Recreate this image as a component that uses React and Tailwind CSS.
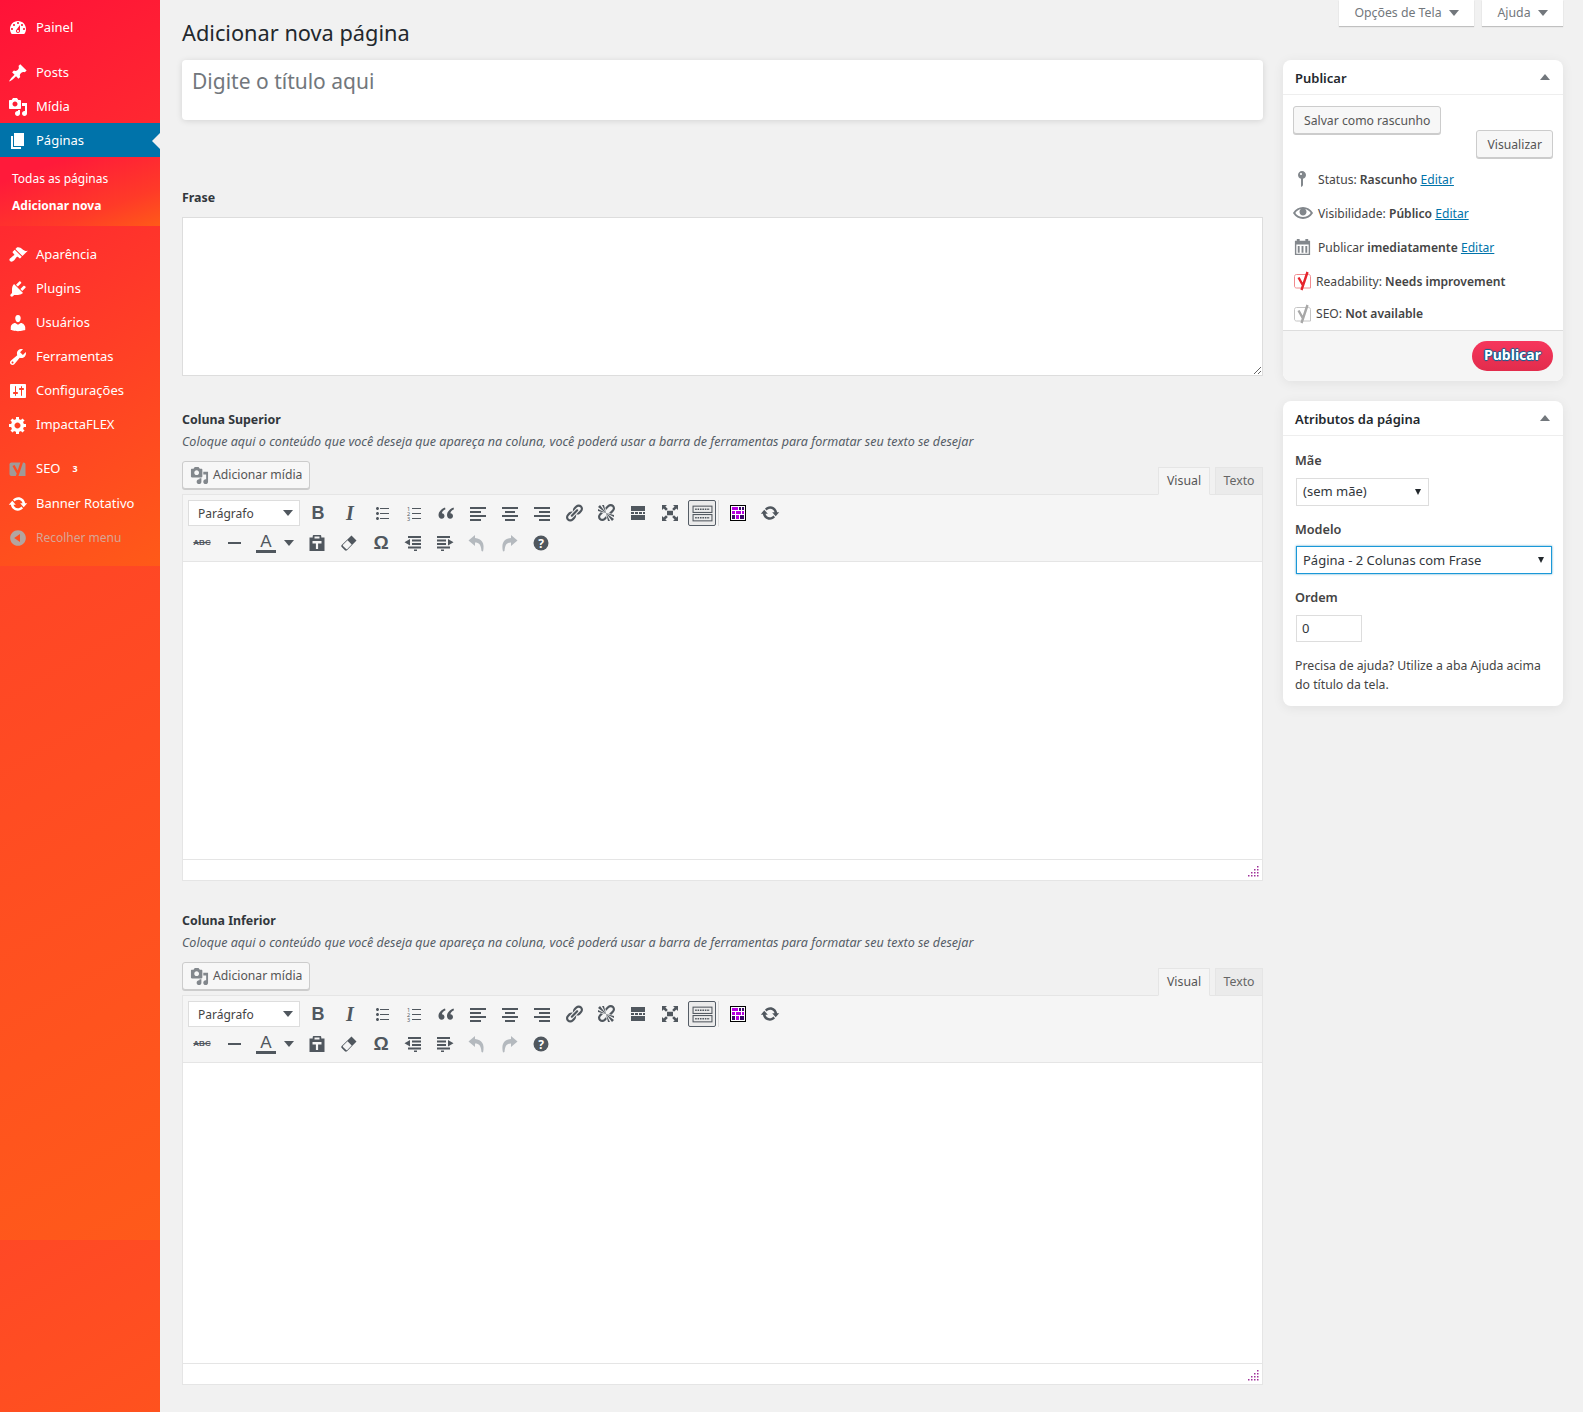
const P = {
  dashboard: "M3.76 16h12.48c1.1-1.37 1.76-3.11 1.76-5 0-4.42-3.58-8-8-8s-8 3.58-8 8c0 1.89.66 3.63 1.76 5zM10 4c.55 0 1 .45 1 1s-.45 1-1 1-1-.45-1-1 .45-1 1-1zM6 6c.55 0 1 .45 1 1s-.45 1-1 1-1-.45-1-1 .45-1 1-1zm8 0c.55 0 1 .45 1 1s-.45 1-1 1-1-.45-1-1 .45-1 1-1zm-5.37 5.55L12 7v6c0 1.1-.9 2-2 2s-2-.9-2-2c0-.57.24-1.08.63-1.45zM4 10c.55 0 1 .45 1 1s-.45 1-1 1-1-.45-1-1 .45-1 1-1zm12 0c.55 0 1 .45 1 1s-.45 1-1 1-1-.45-1-1 .45-1 1-1zm-5 3c0-.55-.45-1-1-1s-1 .45-1 1 .45 1 1 1 1-.45 1-1z",
  post: "M10.44 3.02l1.82-1.82 6.36 6.35-1.83 1.82c-1.05-.68-2.48-.57-3.41.36l-.75.75c-.92.93-1.04 2.35-.35 3.41l-1.83 1.82-2.41-2.41-2.8 2.79c-.42.42-3.38 2.71-3.8 2.29s1.86-3.39 2.28-3.81l2.79-2.79L4.1 9.36l1.83-1.82c1.05.69 2.48.57 3.4-.36l.75-.75c.93-.92 1.05-2.35.36-3.41z",
  media: "M13 11V4c0-.55-.45-1-1-1h-1.67L9 1H5L3.67 3H2c-.55 0-1 .45-1 1v7c0 .55.45 1 1 1h10c.55 0 1-.45 1-1zM7 4.5c1.38 0 2.5 1.12 2.5 2.5S8.38 9.5 7 9.5 4.5 8.38 4.5 7 5.62 4.5 7 4.5zM14 6h5v10.5c0 1.38-1.12 2.5-2.5 2.5S14 17.88 14 16.5s1.12-2.5 2.5-2.5c.17 0 .34.02.5.05V9h-3V6zm-4 8.05V13h2v3.5c0 1.38-1.12 2.5-2.5 2.5S7 17.88 7 16.5 8.12 14 9.5 14c.17 0 .34.02.5.05z",
  page: "M6 15V2h10v13H6zm-1 1h8v2H3V5h2v11z",
  brush: "M14.48 11.06L7.41 3.99l1.5-1.5c.5-.56 2.3-.47 3.51.32 1.21.8 1.43 1.28 2.91 2.1 1.18.64 2.45 1.26 4.45.85zm-.71.71L6.7 4.7 4.93 6.47c-.39.39-.39 1.02 0 1.41l1.06 1.06c.39.39.39 1.03 0 1.42-.6.6-1.43 1.11-2.21 1.69-.35.26-.7.53-1.01.84C1.43 13.23.9 15 2 16.1c1.1 1.1 2.9.6 4.2-.8.3-.3.6-.7.8-1 .6-.8 1.1-1.6 1.7-2.2.4-.4 1-.4 1.4 0l1.1 1c.4.4 1 .4 1.4 0z",
  plugin: "M13.11 4.36L9.87 7.6 8 5.73l3.24-3.24c.35-.34 1.05-.2 1.56.32.52.51.66 1.21.31 1.55zm-8 1.77l.91-1.12 9.01 9.01-1.19.84c-.71.71-2.63 1.16-3.82 1.16H6.14L4.9 17.26c-.59.59-1.54.59-2.12 0-.59-.58-.59-1.53 0-2.12l1.24-1.24v-3.88c0-1.13.4-3.19 1.09-3.89zm7.26 3.97l3.24-3.24c.34-.35 1.04-.21 1.55.31.52.51.66 1.21.31 1.55l-3.24 3.25z",
  users: "M10 9.25c-2.27 0-2.73-3.44-2.73-3.44C7 4.02 7.82 2 9.97 2c2.16 0 2.98 2.02 2.71 3.81 0 0-.41 3.44-2.68 3.44zm0 2.57L12.72 10c2.39 0 4.52 2.33 4.52 4.53v2.49s-3.65 1.13-7.24 1.13c-3.65 0-7.24-1.13-7.24-1.13v-2.49c0-2.25 1.94-4.48 4.47-4.48z",
  tools: "M16.68 9.77c-1.34 1.34-3.3 1.67-4.95.99l-5.41 6.52c-.99.99-2.59.99-3.58 0s-.99-2.59 0-3.57l6.52-5.42c-.68-1.65-.35-3.61.99-4.95 1.28-1.28 3.12-1.62 4.72-1.06l-2.89 2.89 2.82 2.82 2.86-2.87c.53 1.58.18 3.39-1.08 4.65zM3.81 16.21c.4.39 1.04.39 1.43 0 .4-.4.4-1.04 0-1.43-.39-.4-1.03-.4-1.43 0-.39.39-.39 1.03 0 1.43z",
  settings: "M18 16V4c0-.55-.45-1-1-1H3c-.55 0-1 .45-1 1v12c0 .55.45 1 1 1h14c.55 0 1-.45 1-1zM8 11h1c.55 0 1 .45 1 1s-.45 1-1 1H8v1.5c0 .28-.22.5-.5.5s-.5-.22-.5-.5V13H6c-.55 0-1-.45-1-1s.45-1 1-1h1V5.5c0-.28.22-.5.5-.5s.5.22.5.5V11zm5-2h-1c-.55 0-1-.45-1-1s.45-1 1-1h1V5.5c0-.28.22-.5.5-.5s.5.22.5.5V7h1c.55 0 1 .45 1 1s-.45 1-1 1h-1v5.5c0 .28-.22.5-.5.5s-.5-.22-.5-.5V9z",
  gear: "M18 12h-2.18c-.17.7-.44 1.35-.81 1.93l1.54 1.54-2.1 2.1-1.54-1.54c-.58.36-1.23.63-1.91.79V19H8v-2.18c-.68-.16-1.33-.43-1.91-.79l-1.54 1.54-2.12-2.12 1.54-1.54c-.36-.58-.63-1.23-.79-1.91H1V9.03h2.17c.16-.7.44-1.35.8-1.94L2.43 5.55l2.1-2.1 1.54 1.54c.58-.37 1.24-.64 1.93-.81V2h3v2.18c.68.16 1.33.43 1.91.79l1.54-1.54 2.12 2.12-1.54 1.54c.36.59.64 1.24.8 1.94H18V12zm-8.5 1.5c1.66 0 3-1.34 3-3s-1.34-3-3-3-3 1.34-3 3 1.34 3 3 3z",
  update: "M10.2 3.28c3.53 0 6.43 2.61 6.92 6h2.08l-3.5 4-3.5-4h2.32c-.45-1.97-2.21-3.45-4.32-3.45-1.45 0-2.73.71-3.54 1.78L4.95 5.66C6.23 4.2 8.11 3.28 10.2 3.28zm-.4 13.44c-3.52 0-6.43-2.61-6.92-6H.8l3.5-4c1.17 1.33 2.33 2.67 3.5 4H5.48c.45 1.97 2.21 3.45 4.32 3.45 1.45 0 2.73-.71 3.54-1.78l1.71 1.95c-1.28 1.46-3.15 2.38-5.25 2.38z",
  collapse: "M10 2.16c4.33 0 7.84 3.51 7.84 7.84s-3.51 7.84-7.84 7.84S2.16 14.33 2.16 10 5.71 2.16 10 2.16zm2 11.72V6.12L6.18 9.97z",
  pin: "M14 6c0 1.86-1.28 3.41-3 3.86V16c0 1-2 2-2 2V9.86c-1.72-.45-3-2-3-3.86 0-2.21 1.79-4 4-4s4 1.79 4 4zM8 5c0 .55.45 1 1 1s1-.45 1-1-.45-1-1-1-1 .45-1 1z",
  eye: "M19.7 9.4C17.7 6 14 3.9 10 3.9S2.3 6 .3 9.4L0 10l.3.6c2 3.4 5.7 5.5 9.7 5.5s7.7-2.1 9.7-5.5l.3-.6-.3-.6zM10 14.1c-3.1 0-6-1.6-7.7-4.1C3.6 8 5.7 6.6 8 6.1c-.9.6-1.5 1.7-1.5 2.9 0 1.9 1.6 3.5 3.5 3.5s3.5-1.6 3.5-3.5c0-1.2-.6-2.3-1.5-2.9 2.3.5 4.4 1.9 5.7 3.9-1.7 2.5-4.6 4.1-7.7 4.1z",
  calendar: "M2 4h2V2h3v2h6V2h3v2h2v15H2V4zm1.5 4v9.5h13V8h-13zM5 9.5h2v7H5v-7zm4 0h2v7H9v-7zm4 0h2v7h-2v-7z",
  ul: "M5.5 7C4.67 7 4 6.33 4 5.5 4 4.68 4.67 4 5.5 4 6.32 4 7 4.68 7 5.5 7 6.33 6.32 7 5.5 7zM8 5h9v1H8V5zm-2.5 7c-.83 0-1.5-.67-1.5-1.5C4 9.68 4.67 9 5.5 9c.82 0 1.5.68 1.5 1.5 0 .83-.68 1.5-1.5 1.5zM8 10h9v1H8v-1zm-2.5 7c-.83 0-1.5-.67-1.5-1.5 0-.82.67-1.5 1.5-1.5.82 0 1.5.68 1.5 1.5 0 .83-.68 1.5-1.5 1.5zM8 15h9v1H8v-1z",
  quote: "M9 4.5C5.5 5.8 2.5 8.6 2.5 12c0 2.2 1.4 3.7 3.2 3.7 1.6 0 2.8-1.2 2.8-2.8 0-1.5-1.1-2.6-2.6-2.7.2-1.6 1.5-3 3.6-4zM17.5 4.5c-3.5 1.3-6.5 4.1-6.5 7.5 0 2.2 1.4 3.7 3.2 3.7 1.6 0 2.8-1.2 2.8-2.8 0-1.500-1.100-2.600-2.600-2.700.2-1.600 1.500-3 3.600-4z",
  left: "M2 4h16v2H2V4zm0 4h11v2H2V8zm0 4h16v2H2v-2zm0 4h11v2H2v-2z",
  center: "M2 4h16v2H2V4zm3 4h10v2H5V8zm-3 4h16v2H2v-2zm3 4h10v2H5v-2z",
  right: "M2 4h16v2H2V4zm5 4h11v2H7V8zm-5 4h16v2H2v-2zm5 4h11v2H7v-2z",
  link: "M17.74 2.76c1.68 1.69 1.68 4.41 0 6.1l-1.53 1.52c-1.12 1.12-2.7 1.47-4.14 1.09l2.62-2.61.76-.77.76-.76c.84-.84.84-2.2 0-3.04-.84-.85-2.2-.85-3.04 0l-.77.76-3.38 3.38c-.37-1.44-.02-3.02 1.1-4.14l1.52-1.53c1.69-1.68 4.42-1.68 6.1 0zM8.59 13.43l5.34-5.34c.42-.42.42-1.1 0-1.52-.44-.43-1.13-.39-1.53 0l-5.33 5.34c-.42.42-.42 1.1 0 1.52.44.43 1.13.39 1.52 0zm-.76 2.29l4.14-4.15c.38 1.44.03 3.02-1.09 4.14l-1.52 1.53c-1.69 1.68-4.41 1.68-6.1 0-1.68-1.68-1.68-4.42 0-6.1l1.53-1.52c1.12-1.12 2.7-1.47 4.14-1.1l-4.14 4.15c-.85.84-.85 2.2 0 3.05.84.84 2.2.84 3.04 0z",
  unlink: "M17.74 2.26c1.68 1.69 1.68 4.41 0 6.1l-1.53 1.52c-.32.33-.69.58-1.08.77L13 10l1.69-1.64.76-.77.76-.76c.84-.84.84-2.2 0-3.04-.84-.85-2.2-.85-3.04 0l-.77.76-.76.76L10 7l-.65-2.14c.19-.38.44-.75.77-1.07l1.52-1.53c1.69-1.68 4.42-1.68 6.1 0zM2 4l8 6-6-8zm4-2l4 8-2-8H6zM2 6l8 4-8-2V6zm7.36 7.69L10 13l.74 2.35-1.38 1.39c-1.69 1.68-4.41 1.68-6.1 0-1.68-1.68-1.68-4.42 0-6.1l1.39-1.38L7 10l-.69.64-1.52 1.53c-.85.84-.85 2.2 0 3.04.84.85 2.2.85 3.04 0zM18 16l-8-6 6 8zm-4 2l-4-8 2 8h2zm4-4l-8-4 8 2v2z",
  more: "M3 3h14v5H3V3zm0 6h3v2H3V9zm4 0h3v2H7V9zm4 0h3v2h-3V9zm4 0h2v2h-2V9zM3 12h14v5H3v-5z",
  full: "M7 7.8v4.4h6V7.8H7zM2 2h5L5.4 3.6 7.8 6 6 7.8 3.6 5.4 2 7V2zm16 0v5l-1.6-1.6L14 7.8 12.2 6l2.4-2.4L13 2h5zM2 18v-5l1.6 1.6L6 12.2 7.8 14l-2.4 2.4L7 18H2zm16 0h-5l1.6-1.6-2.4-2.4 1.8-1.8 2.4 2.4L18 13v5z",
  paste: "M2.5 4.5h3.2V3.2C5.7 2.5 6.2 2 7 2h6c.8 0 1.3.5 1.3 1.2v1.3h3.2V18h-15V4.5zM7.5 3.6v1.9h5V3.6h-5zM5.5 8v2.4h3.4V16h2.2v-5.6h3.4V8h-9z",
  eraser: "M12.5 2.5l5 5-9.5 9.8c-.6.6-1.5.6-2.1 0L2.700 14c-.6-.6-.6-1.500 0-2.100l9.800-9.400zM8.500 7.300L4 11.800c-.3.3-.3.8 0 1.100l3.200 3.200c.3.3.8.3 1.100 0l4.400-4.600z",
  outdent: "M5 3h13v2H5V3zm4 3.500h9v2H9v-2zm0 3.500h9v2H9v-2zm-4 3.500h13v2H5v-2zm6 3h3V18h-3v-1.500zM1.500 9.200L7 6v6.500L1.500 9.200z",
  indent: "M2 3h13v2H2V3zm0 3.500h9v2H2v-2zm0 3.500h9v2H2v-2zm0 3.500h13v2H2v-2zm4 3h3V18H6v-1.500zM18.500 9.200L13 6v6.500l5.500-3.300z",
  undo: "M8 2L1.500 7.500 8 13V9.500c4 0 6 2 6.500 8.500l1.500.5c2-8-1-13-8-13.500V2z",
  redo: "M12 2l6.500 5.500L12 13V9.500c-4 0-6 2-6.500 8.500L4 18.500c-2-8 1-13 8-13.500V2z",
};

const Ico = ({ d, size = 20, className = "" }) => (
  <svg viewBox="0 0 20 20" width={size} height={size} fill="currentColor" className={className}>
    <path d={d} fillRule="evenodd" />
  </svg>
);

const Yoast = ({ fill, y, stroke, size = 20 }) => (
  <svg viewBox="0 0 20 20" width={size} height={size}>
    <path d="M3.5 3.5h12c1.2 0 2 .8 2 2v11.5H3.5c-1.2 0-2-.8-2-2V5.500c0-1.200.8-2 2-2z" fill={fill} stroke={stroke} strokeWidth="1" />
    <path d="M5.500 6.500l4.500 8M14.500 1l-6 18" fill="none" stroke={y} strokeWidth="2.400" />
  </svg>
);

const Triangle = ({ className = "" }) => (
  <span className={"inline-block w-0 h-0 border-x-[5px] border-x-transparent border-t-[6px] " + className} />
);

const MenuItem = ({ icon, label, active, muted, badge, custom }) => (
  <div className={`relative flex items-center h-[34px] pt-[2px] ${active ? "bg-[#0073aa]" : ""} ${muted ? "text-[#d9a594]" : "text-white"}`}>
    <span className={`w-[36px] pl-[8px] shrink-0 ${muted ? "text-[#b3a5a0]" : ""}`}>
      {custom || <Ico d={icon} />}
    </span>
    <span className={muted ? "text-[12px]" : ""}>{label}</span>
    {badge && <span className="ml-[12px] text-[9px] font-bold">{badge}</span>}
    {active && (
      <span className="absolute right-0 top-[10px] w-0 h-0 border-y-[8px] border-y-transparent border-r-[8px] border-r-[#f1f1f1]" />
    )}
  </div>
);

const Sidebar = () => (
  <aside className="w-[160px] shrink-0 flex flex-col bg-gradient-to-br from-[#ff4a24] to-[#ff521c]">
    <nav className="h-[566px] pt-[10px] bg-[linear-gradient(150deg,#ff1238_0%,#ff2a30_35%,#ff5a18_100%)]">
      <MenuItem icon={P.dashboard} label="Painel" />
      <div className="h-[11px]" />
      <MenuItem icon={P.post} label="Posts" />
      <MenuItem icon={P.media} label="Mídia" />
      <MenuItem icon={P.page} label="Páginas" active />
      <div className="h-[69px] pl-[12px] pt-[8px] text-[12px] text-white bg-[linear-gradient(160deg,#ff1a3a_20%,#ff3a28_70%,#ff5a18_100%)]">
        <div className="h-[27px] leading-[27px]">Todas as páginas</div>
        <div className="h-[27px] leading-[27px] font-bold">Adicionar nova</div>
      </div>
      <div className="h-[11px]" />
      <MenuItem icon={P.brush} label="Aparência" />
      <MenuItem icon={P.plugin} label="Plugins" />
      <MenuItem icon={P.users} label="Usuários" />
      <MenuItem icon={P.tools} label="Ferramentas" />
      <MenuItem icon={P.settings} label="Configurações" />
      <MenuItem icon={P.gear} label="ImpactaFLEX" />
      <div className="h-[10px]" />
      <MenuItem custom={<Yoast fill="#a09a98" y="#ff4a22" size={20} />} label="SEO" badge="3" />
      <div className="h-px" />
      <MenuItem icon={P.update} label="Banner Rotativo" />
      <MenuItem icon={P.collapse} label="Recolher menu" muted />
    </nav>
    <div className="h-[674px] bg-[linear-gradient(150deg,#ff4526,#ff5a1a)]" />
    <div className="flex-1 bg-[linear-gradient(150deg,#ff4826,#ff521e)]" />
  </aside>
);

const WpButton = ({ children, className = "" }) => (
  <div className={"flex items-center h-[28px] px-[10px] whitespace-nowrap bg-[#f7f7f7] border border-[#cccccc] rounded-[3px] shadow-[0_1px_0_#cccccc] text-[12.200px] text-[#555555] " + className}>
    {children}
  </div>
);

const TbIcon = ({ d, className = "text-[#50575e]" }) => (
  <div className={"w-[32px] h-[30px] flex items-center justify-center shrink-0 " + className}>
    <Ico d={d} />
  </div>
);

const TbText = ({ children, className = "" }) => (
  <div className={"w-[32px] h-[30px] flex items-center justify-center shrink-0 text-[#50575e] " + className}>{children}</div>
);

const Toolbar = () => (
  <div className="h-[67px] bg-[#f5f5f5] border-b border-[#e5e5e5] py-[3px]">
    <div className="flex items-center h-[30px] pl-[5px]">
      <div className="w-[112px] h-[26px] mr-[2px] flex items-center justify-between pl-[9px] pr-[6px] bg-white border border-[#dddddd] text-[#444]">
        <span className="text-[12px] pt-[2px]">Parágrafo</span>
        <Triangle className="border-t-[#50575e]" />
      </div>
      <TbText className="font-bold text-[18px] font-['Liberation_Sans',sans-serif]">B</TbText>
      <TbText className="font-bold italic text-[20px] font-['Liberation_Serif',serif]">I</TbText>
      <TbIcon d={P.ul} />
      <TbText>
        <svg viewBox="0 0 20 20" width="20" height="20" fill="currentColor">
          <path d="M8 5h9v1H8V5zm0 5h9v1H8v-1zm0 5h9v1H8v-1z" />
          <text x="3" y="7.500" fontSize="5.500">1</text>
          <text x="3" y="12.500" fontSize="5.500">2</text>
          <text x="3" y="17.500" fontSize="5.500">3</text>
        </svg>
      </TbText>
      <TbIcon d={P.quote} />
      <TbIcon d={P.left} />
      <TbIcon d={P.center} />
      <TbIcon d={P.right} />
      <TbIcon d={P.link} />
      <TbIcon d={P.unlink} />
      <TbIcon d={P.more} />
      <TbIcon d={P.full} />
      <TbText>
        <div className="w-[28px] h-[26px] flex items-center justify-center bg-[#ebebeb] border border-[#555d66] rounded-[2px]">
          <svg viewBox="0 0 20 20" width="21" height="21" fill="none" stroke="#50575e">
            <rect x="1" y="3" width="18" height="6" />
            <rect x="1" y="11" width="18" height="6" />
            <path d="M3 6h14M3 14h14" strokeWidth="1.500" strokeDasharray="1.500 .8" />
          </svg>
        </div>
      </TbText>
      <div className="w-px h-[26px] bg-[#dddddd] mr-[3px]" />
      <TbText>
        <svg viewBox="0 0 16 16" width="16" height="16">
          <rect x=".5" y=".5" width="15" height="15" fill="#fff" stroke="#000" />
          <path d="M2 2h6v3H2zM12 6h2v3h-2zM6 6h5v3H6zM2 6h3v3H2zM6 10h3v4H6z" fill="#b400e0" />
          <path d="M9 2h2v3H9zM12 2h2v3h-2zM2 10h3v4H2zM10 10h4v4h-4z" fill="#3c0a6a" />
        </svg>
      </TbText>
      <TbIcon d={P.update} />
    </div>
    <div className="flex items-center h-[30px] pl-[3px]">
      <TbText className="text-[8px] font-bold line-through font-['Liberation_Sans',sans-serif]">ABC</TbText>
      <TbText>
        <span className="w-[13px] h-[2px] bg-[#50575e]" />
      </TbText>
      <div className="w-[51px] h-[30px] flex items-center pl-[6px] shrink-0">
        <span className="w-[20px] flex flex-col items-center text-[#50575e] text-[17px] leading-[17px] border-b-[3px] border-[#50575e] font-['Liberation_Sans',sans-serif]">A</span>
        <Triangle className="ml-[8px] border-t-[#50575e]" />
      </div>
      <TbIcon d={P.paste} />
      <TbIcon d={P.eraser} />
      <TbText className="text-[19px] font-['Liberation_Sans',sans-serif] font-bold">Ω</TbText>
      <TbIcon d={P.outdent} />
      <TbIcon d={P.indent} />
      <TbIcon d={P.undo} className="text-[#b4b9be]" />
      <TbIcon d={P.redo} className="text-[#b4b9be]" />
      <TbText>
        <svg viewBox="0 0 20 20" width="20" height="20">
          <circle cx="10" cy="10" r="7.500" fill="#50575e" />
          <text x="10" y="14.500" textAnchor="middle" fontSize="12" fontWeight="700" fill="#fff">?</text>
        </svg>
      </TbText>
    </div>
  </div>
);

const Grip = () => (
  <svg width="12" height="12" viewBox="0 0 12 12" fill="#a0309a">
    {[[9, 0], [6, 3], [9, 3], [3, 6], [6, 6], [9, 6], [0, 9], [3, 9], [6, 9], [9, 9]].map(([x, y], i) => (
      <rect key={i} x={x} y={y} width="1.500" height="1.500" />
    ))}
  </svg>
);

const EditorField = ({ label, bodyH, mt }) => (
  <section className={mt}>
    <div className="h-[20px] leading-[22px] text-[12.400px] font-bold text-[#32373c]">{label}</div>
    <div className="mt-[2px] h-[20px] leading-[22px] italic text-[#555d66] text-[12.540px] whitespace-nowrap">
      Coloque aqui o conteúdo que você deseja que apareça na coluna, você poderá usar a barra de ferramentas para formatar seu texto se desejar
    </div>
    <div className="mt-[10px] h-[33px] flex justify-between">
      <WpButton className="w-[128px] h-[27px] pl-[7px] pr-[7px] gap-[4px]">
        <Ico d={P.media} size={19} className="shrink-0 text-[#82878c]" />
        <span>Adicionar mídia</span>
      </WpButton>
      <div className="flex items-end gap-[5px] relative top-px text-[12.300px]">
        <div className="w-[52px] h-[28px] flex items-center justify-center bg-[#f5f5f5] border border-[#e5e5e5] border-b-[#f5f5f5] text-[#555]">Visual</div>
        <div className="w-[48px] h-[28px] flex items-center justify-center bg-[#ebebeb] border border-[#e5e5e5] text-[#666]">Texto</div>
      </div>
    </div>
    <div className="border border-[#e5e5e5] bg-white">
      <Toolbar />
      <div style={{ height: bodyH }} className="bg-white" />
      <div className="h-[21px] border-t border-[#e5e5e5] bg-white flex items-end justify-end pr-[2px] pb-[2px]">
        <Grip />
      </div>
    </div>
  </section>
);

const Box = ({ title, children, className = "" }) => (
  <div className={"bg-white rounded-[8px] shadow-[0_2px_12px_rgba(0,0,0,0.07)] overflow-hidden " + className}>
    <div className="h-[35px] pl-[12px] pr-[13px] flex items-center justify-between border-b border-[#eeeeee] text-[13px] font-semibold text-[#23282d]">
      <span className="pt-[4px]">{title}</span>
      <span className="w-0 h-0 border-x-[5px] border-x-transparent border-b-[6px] border-b-[#72777c]" />
    </div>
    {children}
  </div>
);

const PubRow = ({ h, icon, children, gap = "pl-[35px]", pad = "pt-[2px]" }) => (
  <div style={{ height: h }} className={"relative flex items-center text-[12.100px] text-[#444] " + gap}>
    {icon}
    <span className={pad}>{children}</span>
  </div>
);

const Edit = () => <span className="text-[#0073aa] underline">Editar</span>;

const PublishBox = () => (
  <Box title="Publicar">
    <div className="flex justify-between items-start pt-[11px] pl-[10px] pr-[10px] h-[67px]">
      <WpButton className="pt-[2px]">Salvar como rascunho</WpButton>
      <WpButton className="mt-[24px] pt-[2px]">Visualizar</WpButton>
    </div>
    <PubRow h={34} icon={<Ico d={P.pin} size={20} className="absolute left-[9px] top-[7px] text-[#82878c]" />}>
      Status: <b className="font-semibold">Rascunho</b> <Edit />
    </PubRow>
    <PubRow h={34} icon={<Ico d={P.eye} size={20} className="absolute left-[10px] top-[7px] text-[#82878c]" />}>
      Visibilidade: <b className="font-semibold">Público</b> <Edit />
    </PubRow>
    <PubRow h={34} icon={<Ico d={P.calendar} size={19} className="absolute left-[10px] top-[7px] text-[#82878c]" />}>
      Publicar <b className="font-semibold">imediatamente</b> <Edit />
    </PubRow>
    <PubRow h={33} gap="pl-[33px]" pad="pt-[4px]" icon={<span className="absolute left-[10px] top-[7px]"><Yoast fill="#fff" y="#e6242c" stroke="#f08a8e" /></span>}>
      Readability: <b className="font-semibold">Needs improvement</b>
    </PubRow>
    <PubRow h={32} gap="pl-[33px]" icon={<span className="absolute left-[10px] top-[7px]"><Yoast fill="#fff" y="#a8a8a8" stroke="#c4c4c4" /></span>}>
      SEO: <b className="font-semibold">Not available</b>
    </PubRow>
    <div className="h-[51px] mt-[1px] flex items-start pt-[10px] justify-end pr-[10px] bg-[#f5f5f5] border-t border-[#dddddd]">
      <div className="w-[81px] h-[30px] pb-[4px] rounded-full flex items-center justify-center font-bold text-[14px] text-white bg-[linear-gradient(180deg,#f6365c,#e22c4c)] [text-shadow:0_-1px_1px_#006799,1px_0_1px_#006799,0_1px_1px_#006799,-1px_0_1px_#006799]">
        Publicar
      </div>
    </div>
  </Box>
);

const FakeSelect = ({ value, className = "", textPad = "pt-[2px]" }) => (
  <div className={"h-[28px] ml-[1px] flex items-center justify-between pl-[6px] pr-[7px] bg-white " + className}>
    <span className={"text-[#32373c] " + textPad}>{value}</span>
    <span className="w-0 h-0 border-x-[3px] border-x-transparent border-t-[6px] border-t-[#23282d]" />
  </div>
);

const AttributesBox = () => (
  <Box title="Atributos da página" className="mt-[20px]">
    <div className="pl-[12px] pr-[11px] h-[270px]">
      <div className="pt-[14px] h-[42px] leading-[20px] text-[12.700px] font-semibold text-[#444]">Mãe</div>
      <FakeSelect value="(sem mãe)" textPad="pt-0" className="w-[133px] border border-[#dddddd]" />
      <div className="mt-[13px] h-[20px] leading-[20px] text-[12.700px] font-semibold text-[#444]">Modelo</div>
      <div className="h-[7px]" />
      <FakeSelect value="Página - 2 Colunas com Frase" className="w-[256px] border border-[#1b98d8] shadow-[0_0_2px_rgba(30,140,190,0.8)]" />
      <div className="mt-[13px] h-[20px] leading-[20px] text-[12.700px] font-semibold text-[#444]">Ordem</div>
      <div className="mt-[8px] ml-[1px] w-[66px] h-[27px] flex items-center pl-[5px] border border-[#dddddd] text-[#32373c]">0</div>
      <p className="mt-[14px] leading-[19px] text-[12.250px] text-[#444]">
        Precisa de ajuda? Utilize a aba Ajuda acima do título da tela.
      </p>
    </div>
  </Box>
);

export default function App() {
  return (
    <div className="flex min-h-[1412px] bg-[#f1f1f1] text-[13px] text-[#444] font-['Noto_Sans','Open_Sans',sans-serif]">
      <Sidebar />
      <main className="flex-1 pl-[22px] pr-[20px]">
        <header className="h-[60px] flex justify-between items-start">
          <h1 className="mt-[17px] text-[21.750px] leading-[32px] text-[#23282d]">Adicionar nova página</h1>
          <div className="flex gap-[8px]">
            <div className="w-[135px] h-[26px] bg-white shadow-[0_1px_1px_rgba(0,0,0,0.2)] flex items-center justify-center gap-[7px] text-[#72777c] text-[12.300px]">
              Opções de Tela <Triangle className="border-t-[#72777c]" />
            </div>
            <div className="w-[81px] h-[26px] bg-white shadow-[0_1px_1px_rgba(0,0,0,0.2)] flex items-center justify-center gap-[7px] text-[#72777c] text-[12.300px]">
              Ajuda <Triangle className="border-t-[#72777c]" />
            </div>
          </div>
        </header>
        <div className="flex gap-[20px] items-start">
          <div className="w-[1081px] shrink-0">
            <div className="h-[60px] bg-white rounded-[4px] shadow-[0_1px_6px_rgba(0,0,0,0.12)] pl-[10px]">
              <input
                placeholder="Digite o título aqui"
                className="w-full h-[42px] text-[21px] outline-none bg-transparent placeholder:text-[#72777c]"
              />
            </div>
            <div className="mt-[67px] h-[20px] leading-[22px] text-[12.400px] font-bold text-[#32373c]">Frase</div>
            <textarea className="block mt-[10px] w-full h-[159px] bg-white border border-[#dddddd] outline-none" />
            <EditorField label="Coluna Superior" bodyH={297} mt="mt-[33px]" />
            <EditorField label="Coluna Inferior" bodyH={300} mt="mt-[29px]" />
          </div>
          <div className="w-[280px] shrink-0">
            <PublishBox />
            <AttributesBox />
          </div>
        </div>
      </main>
    </div>
  );
}
